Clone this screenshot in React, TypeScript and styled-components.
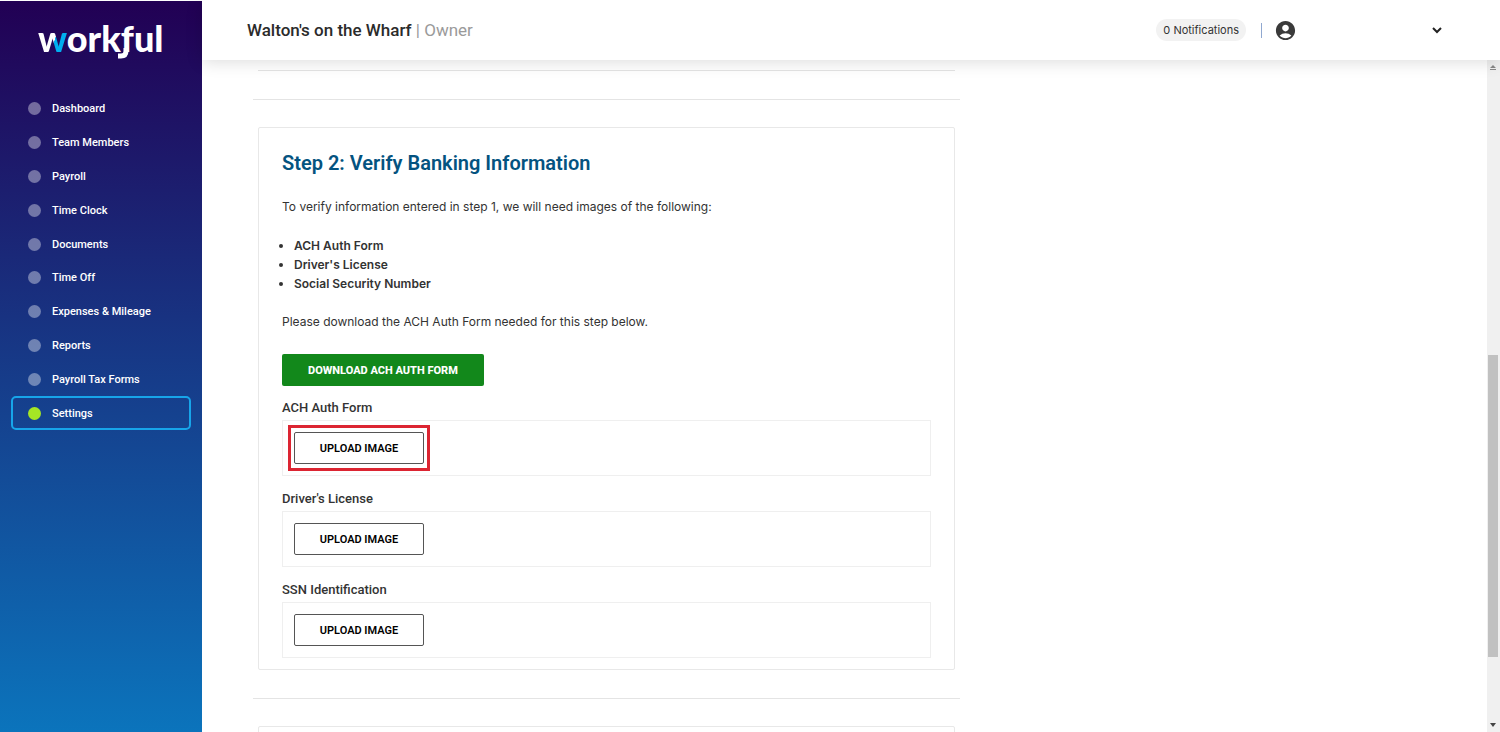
import React from "react";
import styled, { createGlobalStyle, css } from "styled-components";
import { MdAccountCircle } from "react-icons/md";

const GlobalStyle = createGlobalStyle`
  *, *::before, *::after { box-sizing: border-box; }
  body {
    margin: 0;
    background: #fff;
    color: #333;
    font-family: Inter, "Noto Sans", sans-serif;
    font-size: 12px;
  }
  button { font-family: inherit; cursor: pointer; }
`;

const heading = css`
  font-family: Roboto, "Liberation Sans", sans-serif;
`;

const Shell = styled.div`
  display: grid;
  grid-template-columns: 202px minmax(0, 1fr);
  height: 100vh;
  overflow: hidden;
`;

const Sidebar = styled.aside`
  border-top: 1px solid #fff;
  background: linear-gradient(#220054, #0b74bc);
`;

const Logo = styled.a`
  display: block;
  height: 91px;
  padding: 13px 0 0 38px;
  font-family: Lato, sans-serif;
  font-size: 36px;
  font-weight: 900;
  line-height: 48px;
  color: #fff;
  text-decoration: none;
`;

const LogoW = styled.span`
  background: linear-gradient(107deg, #fff 56%, #00aeef 57%);
  background-clip: text;
  -webkit-background-clip: text;
  color: transparent;
`;

const LogoF = styled.span`
  position: relative;
`;

const LogoTail = styled.svg`
  position: absolute;
  left: -6px;
  bottom: 0;
`;

const Nav = styled.nav`
  display: grid;
  grid-template-rows: repeat(10, 1fr);
  height: 338px;
  padding: 0 11px;
`;

const NavLink = styled.a<{ $active?: boolean }>`
  ${heading}
  display: flex;
  align-items: center;
  gap: 11px;
  padding-left: 15px;
  border: 2px solid ${(p) => (p.$active ? "#17a5ea" : "transparent")};
  border-radius: 5px;
  color: #fff;
  font-size: 11px;
  font-weight: 500;
  text-decoration: none;

  &::before {
    content: "";
    width: 13px;
    height: 13px;
    border-radius: 50%;
    background: ${(p) => (p.$active ? "#a5e625" : "rgba(255, 255, 255, 0.38)")};
  }
`;

const Page = styled.div`
  display: flex;
  flex-direction: column;
  min-width: 0;
  min-height: 0;
`;

const Header = styled.header`
  position: relative;
  z-index: 1;
  flex: none;
  display: flex;
  align-items: center;
  height: 60px;
  padding: 0 58px 0 45px;
  background: #fff;
  box-shadow: 0 2px 16px rgba(0, 0, 0, 0.14);
`;

const Company = styled.h1`
  ${heading}
  flex: 1;
  margin: 0;
  font-size: 17px;
  font-weight: 500;
  color: #2b2b2b;
`;

const Role = styled.span`
  font-weight: 400;
  color: #9a9a9a;
`;

const Notifications = styled.button`
  height: 22px;
  padding: 0 7px;
  border: 0;
  border-radius: 11px;
  background: #f2f2f2;
  color: #333;
  font-size: 11px;
`;

const Separator = styled.span`
  width: 1px;
  height: 15px;
  margin: 0 12px 0 15px;
  background: #90a8d0;
`;

const Account = styled.button`
  display: flex;
  align-items: center;
  justify-content: space-between;
  width: 168px;
  padding: 0;
  border: 0;
  background: none;
  color: #3a3a3a;
`;

const Body = styled.div`
  flex: 1;
  display: flex;
  min-height: 0;
`;

const Content = styled.main`
  flex: 1;
  min-width: 0;
  overflow: hidden;
  padding: 0 0 0 51px;
`;

const Column = styled.div`
  width: 57.3%;
`;

const Rule = styled.hr`
  height: 1px;
  margin: 28px 0 27px;
  border: 0;
  background: #e4e4e4;
`;

const Card = styled.section`
  margin: 0 5px;
  padding: 21px 23px 11px;
  border: 1px solid #e8e8e8;
  border-radius: 2px;
`;

const CardEnd = styled.div`
  height: 11px;
  margin: 0 5px;
  border-bottom: 1px solid #e4e4e4;
`;

const CardTitle = styled.h2`
  ${heading}
  margin: 0 0 20px;
  font-size: 20px;
  font-weight: 600;
  line-height: 28px;
  color: #045380;
`;

const Text = styled.p`
  margin: 0;
  line-height: 20px;
`;

const Needed = styled.ul`
  margin: 19px 0;
  padding: 0 0 0 12px;
  font-weight: 600;
  line-height: 19px;
`;

const Download = styled.button`
  ${heading}
  display: block;
  height: 32px;
  margin: 22px 0 10px;
  padding: 0 26px;
  border: 0;
  border-radius: 2px;
  background: #12881b;
  color: #fff;
  font-size: 11px;
  font-weight: 800;
`;

const Field = styled.div`
  & + & { margin-top: 11px; }
`;

const FieldLabel = styled.div`
  ${heading}
  font-size: 13px;
  font-weight: 500;
  line-height: 24px;
`;

const DropBox = styled.div`
  display: flex;
  padding: 11px;
  border: 1px solid #efefef;
`;

const UploadWrap = styled.div<{ $highlight?: boolean }>`
  position: relative;
  ${(p) =>
    p.$highlight &&
    css`
      &::after {
        content: "";
        position: absolute;
        inset: -7px -6px;
        border: 3px solid #dc2532;
        pointer-events: none;
      }
    `}
`;

const Upload = styled.button`
  ${heading}
  display: block;
  width: 130px;
  height: 32px;
  padding: 0;
  border: 1px solid #555;
  border-radius: 2px;
  background: #fff;
  color: #000;
  font-size: 11px;
  font-weight: 600;
`;

const Scrollbar = styled.div`
  display: grid;
  grid-template-rows: 15px 280fr 302fr 61fr 14px;
  width: 13px;
  padding: 0 2px 0 1px;
  background: #f0f0f0;
  justify-items: stretch;
`;

const Thumb = styled.div`
  grid-row: 3;
  background: #c1c1c1;
`;

const ScrollArrow = styled.svg<{ $row: number }>`
  grid-row: ${(p) => p.$row};
  align-self: center;
  justify-self: center;
`;

const links = [
  "Dashboard",
  "Team Members",
  "Payroll",
  "Time Clock",
  "Documents",
  "Time Off",
  "Expenses & Mileage",
  "Reports",
  "Payroll Tax Forms",
  "Settings",
];

const needed = ["ACH Auth Form", "Driver's License", "Social Security Number"];
const uploads = ["ACH Auth Form", "Driver's License", "SSN Identification"];

export default function App() {
  return (
    <>
      <GlobalStyle />
      <Shell>
        <Sidebar>
          <Logo href="#">
            <LogoW>w</LogoW>ork
            <LogoF>
              f
              <LogoTail width="14" height="12" viewBox="0 0 14 12" aria-hidden="true">
                <path d="M11 0v3q0 5-5 5H3" fill="none" stroke="#fff" strokeWidth="5" />
              </LogoTail>
            </LogoF>
            ul
          </Logo>
          <Nav>
            {links.map((name) => (
              <NavLink key={name} href="#" $active={name === "Settings"}>
                {name}
              </NavLink>
            ))}
          </Nav>
        </Sidebar>
        <Page>
          <Header>
            <Company>
              Walton's on the Wharf <Role>| Owner</Role>
            </Company>
            <Notifications>0 Notifications</Notifications>
            <Separator />
            <Account aria-label="Account menu">
              <MdAccountCircle size={23} />
              <svg width="10" height="8" viewBox="0 0 10 8" aria-hidden="true">
                <path d="M1 2l4 4 4-4" fill="none" stroke="#222" strokeWidth="2" />
              </svg>
            </Account>
          </Header>
          <Body>
            <Content>
              <Column>
                <CardEnd />
                <Rule />
                <Card>
                  <CardTitle>Step 2: Verify Banking Information</CardTitle>
                  <Text>
                    To verify information entered in step 1, we will need images of the following:
                  </Text>
                  <Needed>
                    {needed.map((item) => (
                      <li key={item}>{item}</li>
                    ))}
                  </Needed>
                  <Text>Please download the ACH Auth Form needed for this step below.</Text>
                  <Download>DOWNLOAD ACH AUTH FORM</Download>
                  {uploads.map((name, i) => (
                    <Field key={name} role="group" aria-labelledby={`upload-${i}`}>
                      <FieldLabel id={`upload-${i}`}>{name}</FieldLabel>
                      <DropBox>
                        <UploadWrap $highlight={i === 0}>
                          <Upload>UPLOAD IMAGE</Upload>
                        </UploadWrap>
                      </DropBox>
                    </Field>
                  ))}
                </Card>
                <Rule />
                <Card />
              </Column>
            </Content>
            <Scrollbar>
              <ScrollArrow $row={1} width="6" height="6" viewBox="0 0 6 6">
                <path d="M0 3l3-3 3 3zM0 4h6v1H0z" fill="#888" />
              </ScrollArrow>
              <Thumb />
              <ScrollArrow $row={5} width="6" height="4" viewBox="0 0 6 4">
                <path d="M0 0h6L3 4z" fill="#444" />
              </ScrollArrow>
            </Scrollbar>
          </Body>
        </Page>
      </Shell>
    </>
  );
}
